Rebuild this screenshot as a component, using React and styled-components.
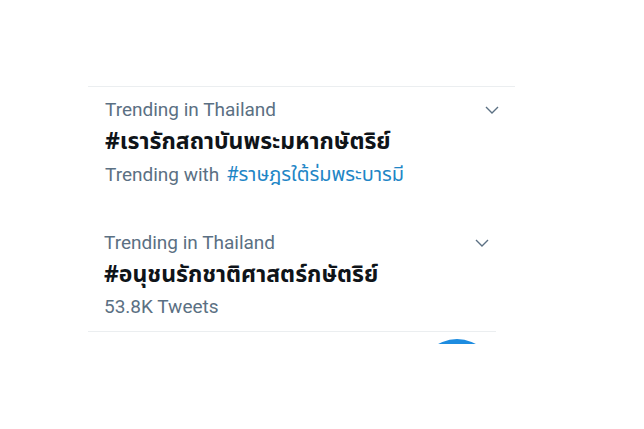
import React from 'react';
import styled, { createGlobalStyle } from 'styled-components';

const GlobalStyle = createGlobalStyle`
  html, body {
    margin: 0;
    padding: 0;
    background: #ffffff;
  }
  body {
    font-family: Roboto, "Noto Sans", "Noto Sans Thai", "Liberation Sans", sans-serif;
  }
`;

const Page = styled.div`
  width: 644px;
  height: 429px;
  padding: 86px 0 0 88px;
  box-sizing: border-box;
  overflow: hidden;
`;

const TrendList = styled.div`
  display: flex;
  flex-direction: column;
`;

const TrendItem = styled.div`
  width: ${({ $width }) => $width}px;
  box-sizing: border-box;
  padding: ${({ $top }) => $top}px ${({ $right }) => $right}px ${({ $bottom }) => $bottom}px ${({ $left }) => $left}px;
  border-top: ${({ $borderTop }) => ($borderTop ? '1px solid #ebeef0' : 'none')};
  border-bottom: ${({ $borderBottom }) => ($borderBottom ? '1px solid #ebeef0' : 'none')};
  display: flex;
  flex-direction: column;
`;

const HeaderRow = styled.div`
  display: flex;
  align-items: center;
  justify-content: space-between;
`;

const Meta = styled.span`
  font-size: 19px;
  line-height: 24px;
  color: #5b7083;
`;

const Hashtag = styled.div`
  margin-top: ${({ $gap }) => $gap}px;
  font-family: "Noto Sans Thai", "Noto Sans", Roboto, sans-serif;
  font-size: 23px;
  line-height: 31px;
  font-weight: 700;
  color: #0f1419;
  white-space: nowrap;
`;

const SubRow = styled.div`
  margin-top: ${({ $gap }) => $gap}px;
  display: flex;
  align-items: baseline;
  gap: 7px;
`;

const Related = styled.span`
  font-family: Roboto, "Noto Sans Thai", "Noto Sans", sans-serif;
  font-size: 20px;
  line-height: 24px;
  color: #1f86c6;
  white-space: nowrap;
`;

const Chevron = styled.svg`
  width: 18px;
  height: 18px;
  fill: none;
  stroke: #5b7083;
  stroke-width: 1.8;
`;

const FabPeek = styled.div`
  width: 408px;
  height: 5px;
  margin-top: 7px;
  overflow: hidden;
  display: flex;
  justify-content: flex-end;
  padding-right: 1px;
  box-sizing: border-box;
`;

const Fab = styled.div`
  flex: none;
  width: 76px;
  height: 76px;
  border-radius: 50%;
  background: #1d8ce0;
`;

const ChevronIcon = () => (
  <Chevron viewBox="0 0 24 24">
    <path d="M4 8 L12 16 L20 8" />
  </Chevron>
);

const trends = [
  {
    id: 1,
    place: 'Trending in Thailand',
    tag: '#เรารักสถาบันพระมหากษัตริย์',
    sub: 'Trending with',
    related: '#ราษฎรใต้ร่มพระบารมี',
    box: { width: 427, top: 11, right: 14, bottom: 22, left: 17, borderTop: true },
  },
  {
    id: 2,
    place: 'Trending in Thailand',
    tag: '#อนุชนรักชาติศาสตร์กษัตริย์',
    sub: '53.8K Tweets',
    box: { width: 408, top: 22, right: 5, bottom: 12, left: 16, borderBottom: true },
  },
];

export default function App() {
  return (
    <>
      <GlobalStyle />
      <Page>
        <TrendList>
          {trends.map((t) => (
            <TrendItem
              key={t.id}
              $width={t.box.width}
              $top={t.box.top}
              $right={t.box.right}
              $bottom={t.box.bottom}
              $left={t.box.left}
              $borderTop={t.box.borderTop}
              $borderBottom={t.box.borderBottom}
            >
              <HeaderRow>
                <Meta>{t.place}</Meta>
                <ChevronIcon />
              </HeaderRow>
              <Hashtag $gap={5}>{t.tag}</Hashtag>
              <SubRow $gap={4}>
                <Meta>{t.sub}</Meta>
                {t.related && <Related>{t.related}</Related>}
              </SubRow>
            </TrendItem>
          ))}
        </TrendList>
        <FabPeek>
          <Fab />
        </FabPeek>
      </Page>
    </>
  );
}
